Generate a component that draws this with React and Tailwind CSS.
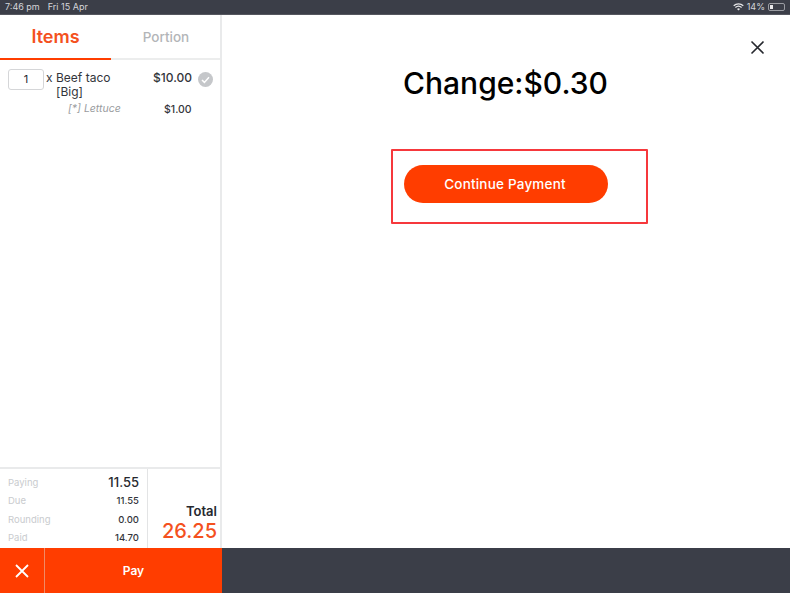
import React from "react";

function Stat({ label, value, big }) {
  return (
    <div className="flex items-center justify-between h-[18.4px]">
      <span className="text-[9.5px] text-[#c9cbce]">{label}</span>
      <span className={big ? "text-[13px] font-medium text-[#26282e]" : "text-[9.5px] font-medium text-[#33353b]"}>{value}</span>
    </div>
  );
}

export default function App() {
  return (
    <div className="w-[790px] h-[593px] flex flex-col overflow-hidden bg-white font-['Inter','Liberation_Sans',sans-serif]">
      <div className="h-[15px] shrink-0 bg-[#3b3e48] border-b border-[#55575f] flex items-center justify-between pl-[5px] pr-[5px] text-[9px] text-[#d5d6da]">
        <div className="flex gap-[8px]">
          <span>7:46 pm</span>
          <span>Fri 15 Apr</span>
        </div>
        <div className="flex items-center gap-[3px]">
          <svg width="11" height="8" viewBox="0 0 11 8" fill="none" stroke="#e8e8ea" strokeWidth="1.2">
            <path d="M.7 2.8a7 7 0 0 1 9.6 0" />
            <path d="M2.4 4.5a4.6 4.6 0 0 1 6.2 0" />
            <path d="M5.5 7.6 4 6a2.2 2.2 0 0 1 3 0z" fill="#e8e8ea" stroke="none" />
          </svg>
          <span>14%</span>
          <div className="w-[17px] h-[8px] border border-[#9a9ca2] rounded-[2px] p-px">
            <div className="w-[3px] h-full bg-[#e8e8ea]" />
          </div>
        </div>
      </div>

      <div className="flex-1 flex min-h-0">
        <div className="w-[222px] shrink-0 border-r-2 border-[#e9eaeb] flex flex-col">
          <div className="h-[45px] shrink-0 flex border-b-2 border-[#eceded]">
            <div className="w-[111px] h-[45px] border-b-2 border-[#ff3d00] flex items-center justify-center text-[18px] font-semibold text-[#f4511e]">
              Items
            </div>
            <div className="flex-1 flex items-center justify-center text-[13.5px] font-medium text-[#b3b5b8] pl-[1px] pt-[2px]">
              Portion
            </div>
          </div>

          <div className="flex-1 min-h-0 pl-[8px] pt-[9px]">
            <div className="flex items-start">
              <div className="w-[36px] h-[21px] shrink-0 border border-[#d5d6d8] rounded-[3px] flex items-center justify-center text-[11px] text-[#26282e]">1</div>
              <div className="ml-[2px] text-[12px] leading-[14px] pt-[2px] text-[#33353b] w-[110px] shrink-0 flex">
                <span className="w-[10px] shrink-0">x</span>
                <span>Beef taco<br />[Big]</span>
              </div>
              <div className="w-[39px] shrink-0 text-[12px] leading-[14px] pt-[2px] text-right text-[#33353b] ml-[-3px] font-medium whitespace-nowrap">$10.00</div>
              <div className="ml-[6px] mt-[3px] w-[15px] h-[15px] shrink-0 rounded-full bg-[#c5c7ca] flex items-center justify-center">
                <svg width="9" height="8" viewBox="0 0 9 8" fill="none" stroke="#fff" strokeWidth="1.5"><path d="m1 4 2.4 2.4L8 1.2" /></svg>
              </div>
            </div>
            <div className="flex mt-[1px] items-center">
              <span className="ml-[60px] text-[10.5px] italic text-[#9a9ca0] w-[96px]">[*] Lettuce</span>
              <span className="text-[10.5px] font-medium text-[#33353b] mt-[2px]">$1.00</span>
            </div>
          </div>

          <div className="h-[81px] shrink-0 border-t-2 border-[#e9eaeb] flex">
            <div className="w-[148px] border-r border-[#e3e4e5] pl-[8px] pr-[8px] pt-[5px] flex flex-col">
              <Stat label="Paying" value="11.55" big />
              <Stat label="Due" value="11.55" />
              <Stat label="Rounding" value="0.00" />
              <Stat label="Paid" value="14.70" />
            </div>
            <div className="flex-1 flex flex-col items-end justify-end pr-[3px] pb-[5px]">
              <span className="text-[13px] leading-[15px] font-semibold text-[#26282e]">Total</span>
              <span className="text-[20px] leading-[24px] font-medium text-[#f4511e]">26.25</span>
            </div>
          </div>
        </div>

        <div className="flex-1 relative flex flex-col pl-[169px]">
          <button className="absolute right-[25px] top-[25px] text-[#26282e]" aria-label="Close">
            <svg width="15" height="15" viewBox="0 0 15 15" fill="none" stroke="currentColor" strokeWidth="1.6" className="block"><path d="m1.5 1.5 12 12M13.5 1.5l-12 12" /></svg>
          </button>
          <div className="w-[257px] pt-[49px] h-[134px] shrink-0">
            <div className="w-[204px] ml-[12px] text-center text-[30px] leading-[38px] font-medium text-black whitespace-nowrap">
              Change:$0.30
            </div>
          </div>
          <div className="w-[257px] h-[75px] border-2 border-[#f6383c] rounded-[1px] pl-[11px] pt-[14px]">
            <button className="w-[204px] h-[38px] rounded-full bg-[#ff3d00] text-white text-[13.5px] font-medium tracking-[0.2px] pr-[2px]">
              Continue Payment
            </button>
          </div>
        </div>
      </div>

      <div className="h-[45px] shrink-0 bg-[#3b3e48] flex">
        <div className="w-[222px] flex bg-[#ff3d00] text-white">
          <div className="w-[45px] border-r border-[#f08a66] flex items-center justify-center">
            <svg width="14" height="14" viewBox="0 0 14 14" fill="none" stroke="#fff" strokeWidth="1.8"><path d="m1 1 12 12M13 1 1 13" /></svg>
          </div>
          <div className="flex-1 flex items-center justify-center text-[12px] font-semibold">Pay</div>
        </div>
      </div>
    </div>
  );
}
